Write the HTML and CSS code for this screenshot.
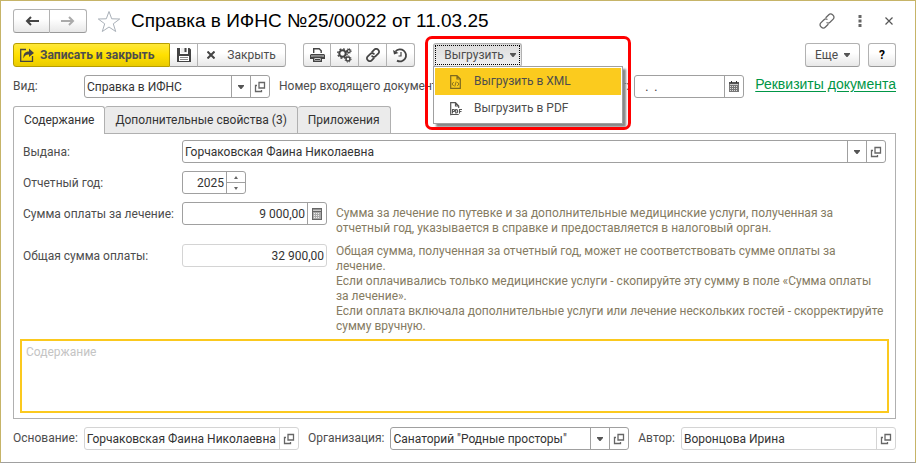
FILE: index.html
```html
<!DOCTYPE html>
<html lang="ru">
<head>
<meta charset="utf-8">
<title>Справка в ИФНС №25/00022 от 11.03.25</title>
<link rel="stylesheet" href="styles.css">
</head>
<body>
<svg class="defs" aria-hidden="true">
  <symbol id="i-open" viewBox="0 0 12 12"><path d="M5 1.500h5.500v5.500H5z M3 4.500H1.500v6h6V9" fill="none" stroke="#666" stroke-width="1.300"/></symbol>
  <symbol id="i-drop" viewBox="0 0 6 4"><path d="M0 0h6v1L3.500 4h-1L0 1z" fill="#555"/></symbol>
</svg>
<main class="window">
  <header class="titlebar">
    <div class="group nav">
      <button class="btn" aria-label="Назад"><svg width="14" height="10" viewBox="0 0 14 10"><path d="M14 5H3M6 1L2 5l4 4" fill="none" stroke="#444" stroke-width="2"/></svg></button>
      <button class="btn" aria-label="Вперед"><svg width="14" height="10" viewBox="0 0 14 10"><path d="M0 5h11M8 1l4 4-4 4" fill="none" stroke="#aaa" stroke-width="2"/></svg></button>
    </div>
    <button class="plain" aria-label="Избранное"><svg width="24" height="23" viewBox="0 0 24 23"><path d="M12 1.500l2.700 7.300 8 .2-6.400 4.800 2.400 7.700-6.700-4.500-6.700 4.500 2.400-7.700L1.300 9l8-.2z" fill="#fff" stroke="#a9b0b8"/></svg></button>
    <h1>Справка в ИФНС №25/00022 от 11.03.25</h1>
    <div class="tools">
      <button class="plain" aria-label="Ссылка"><svg width="16" height="16" viewBox="0 0 16 16"><g fill="none" stroke="#666" stroke-width="1.300" stroke-linecap="round"><path d="M7 4.500l2.800-2.800a2.600 2.600 0 0 1 3.700 0l.7.700a2.600 2.600 0 0 1 0 3.700L11 9.300a2.600 2.600 0 0 1-3 .4"/><path d="M9 11.500l-2.800 2.800a2.600 2.600 0 0 1-3.700 0l-.7-.7a2.600 2.600 0 0 1 0-3.700L5 6.700a2.600 2.600 0 0 1 3-.4"/></g></svg></button>
      <button class="plain" aria-label="Меню"><svg width="4" height="12" viewBox="0 0 4 12"><path d="M.5 0h3v3h-3zM.5 4.500h3v3h-3zM.5 9h3v3h-3z" fill="#666"/></svg></button>
      <button class="plain" aria-label="Закрыть окно"><svg width="8" height="8" viewBox="0 0 8 8"><path d="M.5.5l7 7m0-7l-7 7" stroke="#555" stroke-width="1.200"/></svg></button>
    </div>
  </header>

  <div class="toolbar">
    <div class="group">
      <button class="btn primary"><svg width="14" height="14" viewBox="0 0 14 14"><path d="M6 1.500H.7v11.800h11.800V8" fill="none" stroke="#444" stroke-width="1.300"/><path d="M3.500 10.500C3 6 5 3.500 9 3.500V.5L14 5 9 9V6.500C6 6.300 4.500 7.500 3.500 10.500z" fill="#444"/></svg>Записать и закрыть</button>
      <button class="btn icon" aria-label="Записать"><svg width="14" height="14" viewBox="0 0 14 14"><path d="M0 0h3v6h8V0h1.500L14 1.500V14H0z" fill="#444"/><path d="M4 0h6v5H4z" fill="#eee"/><path d="M7.500 0h2v4h-2z" fill="#444"/><path d="M2 8h10v5H2z" fill="#fff"/><path d="M3 9h8v1H3zM3 11h8v1H3z" fill="#888"/></svg></button>
      <button class="btn close"><svg width="8" height="8" viewBox="0 0 8 8"><path d="M.5.5l7 7m0-7l-7 7" stroke="#444" stroke-width="2"/></svg>Закрыть</button>
    </div>
    <div class="group">
      <button class="btn icon" aria-label="Печать"><svg width="15" height="14" viewBox="0 0 15 14"><path d="M3.700 5V.7h5.500l2 2V5" fill="#fff" stroke="#444" stroke-width="1.400"/><path d="M1 6h13l1 1v4H0V7z" fill="#444"/><path d="M1 8h13" stroke="#fff" stroke-width=".8"/><path d="M3.700 9.500v3.800h7.600V9.500z" fill="#fff" stroke="#444" stroke-width="1.400"/><path d="M5 11.500h5" stroke="#444"/></svg></button>
      <button class="btn icon" aria-label="Настройки"><svg width="15" height="15" viewBox="0 0 15 15"><g fill="none" stroke="#444"><circle cx="5.500" cy="5.500" r="3.200" stroke-width="2"/><circle cx="5.500" cy="5.500" r="4.700" stroke-width="1.400" stroke-dasharray="1.900 1.790"/><circle cx="11.800" cy="3" r="1.500" stroke-width="1.300"/><circle cx="11.800" cy="3" r="2.500" stroke-width=".8" stroke-dasharray="1 .96"/><circle cx="11" cy="11" r="2" stroke-width="1.500"/><circle cx="11" cy="11" r="3.100" stroke-width="1" stroke-dasharray="1.200 1.230"/></g></svg></button>
      <button class="btn icon" aria-label="Связи"><svg width="14" height="14" viewBox="0 0 16 16"><g fill="none" stroke="#444" stroke-width="2" stroke-linecap="round"><path d="M7 4.500l2.800-2.800a2.600 2.600 0 0 1 3.700 0l.7.700a2.600 2.600 0 0 1 0 3.700L11 9.300a2.600 2.600 0 0 1-4 0"/><path d="M9 11.500l-2.800 2.800a2.600 2.600 0 0 1-3.700 0l-.7-.7a2.600 2.600 0 0 1 0-3.700L5 6.700a2.600 2.600 0 0 1 4 0"/></g></svg></button>
      <button class="btn icon" aria-label="История"><svg width="15" height="15" viewBox="0 0 15 15"><path d="M2.500 3.500A6 6 0 1 1 4 12.600" fill="none" stroke="#444" stroke-width="1.800"/><path d="M0 2l1 4.500L5.500 5z" fill="#444"/><path d="M8 4v4H5.500" fill="none" stroke="#444" stroke-width="1.200"/></svg></button>
    </div>
    <div class="export">
      <button class="btn pressed" aria-expanded="true"><span class="focus">Выгрузить<svg class="drop"><use href="#i-drop"/></svg></span></button>
      <div class="menu" role="menu">
        <button class="item active" role="menuitem"><svg width="12" height="14" viewBox="0 0 12 14"><path d="M.7 13.300V.7H7l3.300 3.300v9.300z M7 .7V4h3.300" fill="none" stroke="#7d691f" stroke-width="1.200"/><path d="M3.700 7L2 9l1.700 2M7.300 7L9 9l-1.700 2M6.200 6.500l-1.400 5" fill="none" stroke="#7d691f" stroke-width=".9"/></svg>Выгрузить в XML</button>
        <button class="item" role="menuitem"><svg width="12" height="14" viewBox="0 0 12 14"><path d="M.7 13.300V.7H5.500L8.700 4v2M5.500 .7V4h3.200M.7 12.500h8" fill="none" stroke="#555" stroke-width="1.200"/><path d="M2.500 11.500v-4h1.200a1 1 0 0 1 0 2H2.500M5.700 7.500v3.500h.6c1.800 0 1.800-3.500 0-3.500zM9.500 11.500v-4H12M9.500 9.500h2" fill="none" stroke="#555" stroke-width="1.100"/></svg>Выгрузить в PDF</button>
      </div>
      <div class="frame"></div>
    </div>
    <div class="right">
      <button class="btn more">Еще<svg class="drop"><use href="#i-drop"/></svg></button>
      <button class="btn help">?</button>
    </div>
  </div>

  <div class="props">
    <label class="kind" for="kind">Вид:</label>
    <div class="field kind-field"><input id="kind" value="Справка в ИФНС"><button aria-label="Выбрать"><svg class="drop"><use href="#i-drop"/></svg></button><button aria-label="Открыть"><svg class="open"><use href="#i-open"/></svg></button></div>
    <label class="number" for="num">Номер входящего документа:</label>
    <div class="field num-field"><input id="num"></div>
    <label for="date">от:</label>
    <div class="field date"><input id="date" value="  .  ."><button aria-label="Календарь"><svg width="10" height="11" viewBox="0 0 10 11"><path d="M0 1h10v10H0z" fill="#777"/><path d="M0 1h10v2H0z" fill="#555"/><path d="M2 0h1v2H2zM7 0h1v2H7z" fill="#333"/><path d="M1 3.500h8" stroke="#ccc"/><path d="M1 5.500h8M1 7.500h8M1 9.500h8" stroke="#ddd" stroke-dasharray="1 1"/></svg></button></div>
    <a href="#">Реквизиты документа</a>
  </div>

  <div class="tabs" role="tablist">
    <button class="tab current" role="tab" aria-selected="true">Содержание</button>
    <button class="tab" role="tab">Дополнительные свойства (3)</button>
    <button class="tab" role="tab">Приложения</button>
  </div>
  <section class="panel">
    <div class="row">
      <label for="who">Выдана:</label>
      <div class="field wide"><input id="who" value="Горчаковская Фаина Николаевна"><button aria-label="Выбрать"><svg class="drop"><use href="#i-drop"/></svg></button><button aria-label="Открыть"><svg class="open"><use href="#i-open"/></svg></button></div>
    </div>
    <div class="row">
      <label for="year">Отчетный год:</label>
      <div class="field year"><input id="year" value="2025"><div class="spin"><button aria-label="Больше"><svg width="4" height="3" viewBox="0 0 4 3"><path d="M2 0l2 3H0z" fill="#666"/></svg></button><button aria-label="Меньше"><svg width="4" height="3" viewBox="0 0 4 3"><path d="M0 0h4L2 3z" fill="#666"/></svg></button></div></div>
    </div>
    <div class="row">
      <label for="sum">Сумма оплаты за лечение:</label>
      <div class="field money"><input id="sum" value="9 000,00"><button aria-label="Калькулятор"><svg width="10" height="12" viewBox="0 0 10 12"><path d="M0 0h10v12H0z" fill="#666"/><path d="M1 1.500h8v1.500H1z" fill="#ccc"/><path d="M1 4h8v7H1z" fill="#aaa"/><path d="M2 5.500h6M2 7.500h6M2 9.500h6" stroke="#eee" stroke-dasharray="1 1"/></svg></button></div>
      <p>Сумма за лечение по путевке и за дополнительные медицинские услуги, полученная за отчетный&nbsp;год, указывается в справке и предоставляется в налоговый орган.</p>
    </div>
    <div class="row total">
      <label for="total">Общая сумма оплаты:</label>
      <div class="field money muted"><input id="total" value="32 900,00" readonly></div>
      <p>Общая сумма, полученная за отчетный год, может не соответствовать сумме оплаты за лечение.<br>Если оплачивались только медицинские услуги - скопируйте эту сумму в поле «Сумма оплаты за&nbsp;лечение».<br>Если оплата включала дополнительные услуги или лечение нескольких гостей - скорректируйте сумму вручную.</p>
    </div>
    <textarea aria-label="Содержание" placeholder="Содержание"></textarea>
  </section>

  <footer class="bottom">
    <label for="base">Основание:</label>
    <div class="field side muted"><input id="base" value="Горчаковская Фаина Николаевна" readonly><button aria-label="Открыть"><svg class="open"><use href="#i-open"/></svg></button></div>
    <label for="org">Организация:</label>
    <div class="field mid"><input id="org" value="Санаторий &quot;Родные просторы&quot;"><button aria-label="Выбрать"><svg class="drop"><use href="#i-drop"/></svg></button><button aria-label="Открыть"><svg class="open"><use href="#i-open"/></svg></button></div>
    <label for="author">Автор:</label>
    <div class="field side muted"><input id="author" value="Воронцова Ирина" readonly><button aria-label="Открыть"><svg class="open"><use href="#i-open"/></svg></button></div>
  </footer>
</main>
</body>
</html>
```
FILE: styles.css
```css
* { box-sizing: border-box; }
body {
  margin: 0;
  background: #fff;
  font: 12px/15px Roboto, "Liberation Sans", Arial, sans-serif;
  color: #4d4d4d;
}
button, input, textarea { font: inherit; color: inherit; margin: 0; }
button { padding: 0; }
svg { display: block; flex: none; }
.defs { position: absolute; width: 0; height: 0; }
.drop { width: 6px; height: 4px; }
.open { width: 12px; height: 12px; }

.window {
  min-height: 100vh;
  padding: 8px 19px 12px 12px;
  border: 1px solid #c6b468;
  border-bottom-color: #a0a0a0;
}

.titlebar { display: flex; align-items: center; height: 24px; }
.plain { padding: 0; border: 0; background: none; }
.nav .btn { width: 37px; height: 24px; }
.titlebar > .plain { margin: 0 10px; }
h1 { margin: 0; font: 400 19px/24px "Liberation Sans", Arial, sans-serif; color: #000; white-space: nowrap; }
.tools { display: flex; align-items: center; gap: 23px; margin-left: auto; padding-right: 3px; }

.group { display: flex; }
.btn {
  display: flex;
  align-items: center;
  justify-content: center;
  height: 24px;
  border: 1px solid #b2b2b2;
  border-bottom-color: #9a9a9a;
  background: linear-gradient(#fff 40%, #e8e8e8);
  border-radius: 3px;
  white-space: nowrap;
}
.group .btn { border-radius: 0; }
.group .btn + .btn { border-left: 0; }
.group .btn:first-child { border-radius: 3px 0 0 3px; }
.group .btn:last-child { border-radius: 0 3px 3px 0; }
.btn.icon { width: 28px; }
.group .btn.primary {
  justify-content: flex-start;
  width: 157px;
  padding-left: 6px;
  gap: 6px;
  border-color: #b79e00;
  background: linear-gradient(#ffe83a, #ffe000 50%, #eacb00);
  font-weight: 700;
}
.btn.close { width: 88px; gap: 12px; }

.toolbar { display: flex; margin-top: 10px; }
.toolbar > .group + .group { margin-left: 17px; }
.export { position: relative; margin-left: 18px; }
.pressed { width: 89px; padding: 1px; background: linear-gradient(#dcdcdc, #f0f0f0); }
.focus {
  display: flex;
  flex: 1;
  align-items: center;
  justify-content: center;
  align-self: stretch;
  gap: 6px;
  padding-left: 5px;
  border: 1px dotted #000;
}
.menu {
  position: absolute;
  z-index: 2;
  top: 23px;
  left: 0;
  width: 190px;
  padding: 1px;
  border: 1px solid #a0a0a0;
  background: #fff;
  box-shadow: 3px 3px 2px #888;
}
.item {
  display: flex;
  align-items: center;
  gap: 12px;
  width: 100%;
  height: 27px;
  padding-left: 15px;
  border: 0;
  background: #fff;
}
.item.active { background: #fbcb1e; }
.frame {
  position: absolute;
  z-index: 3;
  top: -7px;
  left: -8px;
  width: 206px;
  height: 94px;
  border: 3px solid #f00;
  border-radius: 7px;
  pointer-events: none;
}
.right { display: flex; gap: 8px; margin-left: auto; }
.more { width: 55px; gap: 6px; }
.help { width: 28px; font-weight: 700; color: #000; }

.field {
  display: flex;
  height: 23px;
  border: 1px solid #a0a0a0;
  border-radius: 3px;
  background: #fff;
  color: #333;
}
.field input {
  flex: 1;
  width: 0;
  min-width: 0;
  padding: 1px 2px 0;
  border: 0;
  outline: 0;
  background: none;
}
.field > button {
  display: flex;
  align-items: center;
  justify-content: center;
  width: 19px;
  border: 0;
  border-left: 1px solid #a0a0a0;
  background: none;
}
.field.muted, .field.muted > button { border-color: #d4d4d4; }

.props { display: flex; align-items: center; margin-top: 8px; white-space: nowrap; }
.kind { width: 71px; }
.kind-field { width: 186px; }
.number { margin: 0 5px 0 9px; }
.num-field { flex: 1; margin-right: 5px; }
.date { width: 110px; margin: 0 11px 0 5px; }
.props .date input { padding-left: 4px; white-space: pre; }
.props a {
  align-self: flex-start;
  font: 14px/18px "Liberation Sans", Arial, sans-serif;
  color: #009646;
  text-underline-offset: 2px;
}

.tabs { display: flex; margin-top: 8px; }
.tab {
  height: 27px;
  padding: 0 10px;
  border: 1px solid #b0b0b0;
  border-left: 0;
  border-radius: 3px 3px 0 0;
  border-bottom: 0;
  background: #ebebeb;
  color: #333;
}
.tab.current { position: relative; z-index: 1; height: 28px; margin-bottom: -1px; border-left: 1px solid #b0b0b0; background: #fff; }
.panel { padding: 6px 6px 5px; border: 1px solid #b0b0b0; }
.row { display: flex; align-items: flex-start; margin: 0 3px 8px; }
.row label { width: 159px; padding-top: 5px; white-space: nowrap; }
.row .wide { flex: 1; }
.row p { flex: 1; margin: 4px 0 0 9px; color: #857b62; }
.row.total p { margin-top: 0; }
.row.total { margin-bottom: 5px; }
.year { width: 64px; }
.money { width: 145px; }
.year input, .money input { text-align: right; }
.spin { display: flex; flex-direction: column; width: 19px; border-left: 1px solid #a0a0a0; }
.spin button { display: flex; flex: 1; align-items: center; justify-content: center; border: 0; background: none; }
.spin button + button { border-top: 1px solid #a0a0a0; }
textarea {
  display: block;
  width: 100%;
  height: 74px;
  padding: 4px;
  border: 2px solid #fbc91e;
  outline: 0;
  resize: none;
}
textarea::placeholder { color: #c4c4c4; }

.bottom { display: flex; align-items: center; margin-top: 8px; white-space: nowrap; }
.bottom .field { margin: 0 9px 0 6px; }
.bottom .field:last-child { margin-right: 0; }
.side { flex: 9 1 0; }
.mid { flex: 10 1 0; }
```
